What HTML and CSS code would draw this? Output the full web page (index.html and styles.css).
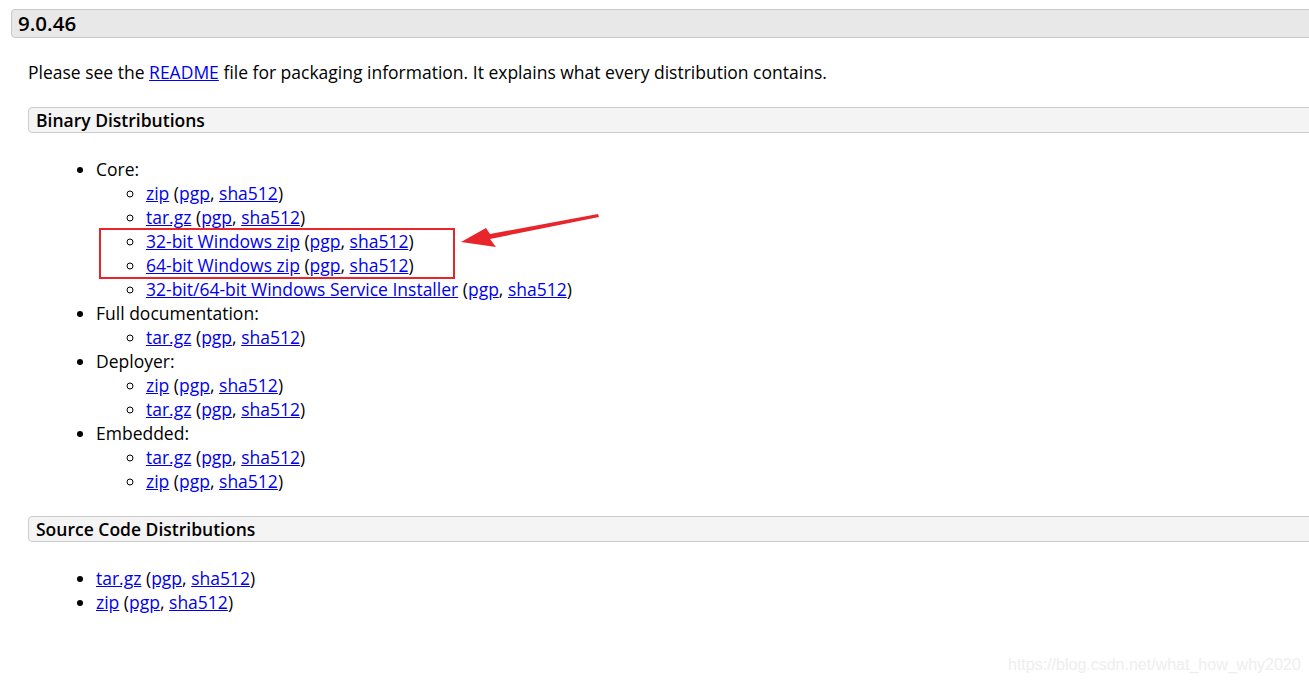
FILE: index.html
```html
<!DOCTYPE html>
<html>
<head>
<meta charset="utf-8">
<link rel="stylesheet" href="styles.css">
</head>
<body>
<div class="page">
  <h3 class="version">9.0.46</h3>
  <div class="section">
    <p class="intro">Please see the <a href="#">README</a> file for packaging information. It explains what every distribution contains.</p>
    <h4 class="sub">Binary Distributions</h4>
    <ul class="dist">
      <li>Core:
        <ul>
          <li><a href="#">zip</a> (<a href="#">pgp</a>, <a href="#">sha512</a>)</li>
          <li><a href="#">tar.gz</a> (<a href="#">pgp</a>, <a href="#">sha512</a>)</li>
          <li><a href="#">32-bit Windows zip</a> (<a href="#">pgp</a>, <a href="#">sha512</a>)</li>
          <li><a href="#">64-bit Windows zip</a> (<a href="#">pgp</a>, <a href="#">sha512</a>)</li>
          <li><a href="#">32-bit/64-bit Windows Service Installer</a> (<a href="#">pgp</a>, <a href="#">sha512</a>)</li>
        </ul>
      </li>
      <li>Full documentation:
        <ul>
          <li><a href="#">tar.gz</a> (<a href="#">pgp</a>, <a href="#">sha512</a>)</li>
        </ul>
      </li>
      <li>Deployer:
        <ul>
          <li><a href="#">zip</a> (<a href="#">pgp</a>, <a href="#">sha512</a>)</li>
          <li><a href="#">tar.gz</a> (<a href="#">pgp</a>, <a href="#">sha512</a>)</li>
        </ul>
      </li>
      <li>Embedded:
        <ul>
          <li><a href="#">tar.gz</a> (<a href="#">pgp</a>, <a href="#">sha512</a>)</li>
          <li><a href="#">zip</a> (<a href="#">pgp</a>, <a href="#">sha512</a>)</li>
        </ul>
      </li>
    </ul>
    <h4 class="sub">Source Code Distributions</h4>
    <ul class="dist">
      <li><a href="#">tar.gz</a> (<a href="#">pgp</a>, <a href="#">sha512</a>)</li>
      <li><a href="#">zip</a> (<a href="#">pgp</a>, <a href="#">sha512</a>)</li>
    </ul>
  </div>
</div>
<div class="highlight"></div>
<svg class="arrow" width="160" height="50" viewBox="0 0 160 50">
  <polygon fill="#e8252b" points="138,2 139,5 30,27 36,35 1,30 26,16 30,22"/>
</svg>
<div class="watermark">https://blog.csdn.net/what_how_why2020</div>
</body>
</html>
```
FILE: styles.css
```css
html, body {
  margin: 0;
  padding: 0;
  overflow: hidden;
  background: #fff;
}
body {
  font-family: "Open Sans", "Liberation Sans", sans-serif;
  font-size: 17.5px;
  line-height: 24px;
  color: #000;
  width: 1309px;
  height: 684px;
  position: relative;
}
.page {
  padding: 9px 0 0 11px;
  width: 1320px;
}
.version {
  margin: 0;
  height: 27px;
  line-height: 27px;
  font-size: 20.5px;
  font-weight: 600;
  background: #e8e8e8;
  border: 1px solid #c8c8c8;
  border-radius: 4px;
  padding: 0 6px;
}
.section {
  padding: 22px 0 0 17px;
}
.intro {
  margin: 0 0 23px 0;
}
a {
  color: #0000ee;
  text-decoration: underline;
}
.sub {
  margin: 0;
  height: 24px;
  line-height: 24px;
  font-size: 17.5px;
  font-weight: 600;
  background: #f4f4f4;
  border: 1px solid #cccccc;
  border-radius: 4px;
  padding: 0 7px;
}
.dist {
  margin: 24px 0 23px 0;
  padding-left: 68px;
  list-style: disc;
}
.dist ul {
  margin: 0;
  padding-left: 50px;
  list-style: circle;
}
.highlight {
  position: absolute;
  left: 99px;
  top: 228px;
  width: 352px;
  height: 47px;
  border: 2px solid #e8252b;
}
.arrow {
  position: absolute;
  left: 460px;
  top: 212px;
}
.watermark {
  position: absolute;
  left: 1008px;
  top: 655px;
  font-family: "Liberation Sans", Arial, sans-serif;
  font-size: 16px;
  color: #eeeeee;
  line-height: 20px;
}
```
